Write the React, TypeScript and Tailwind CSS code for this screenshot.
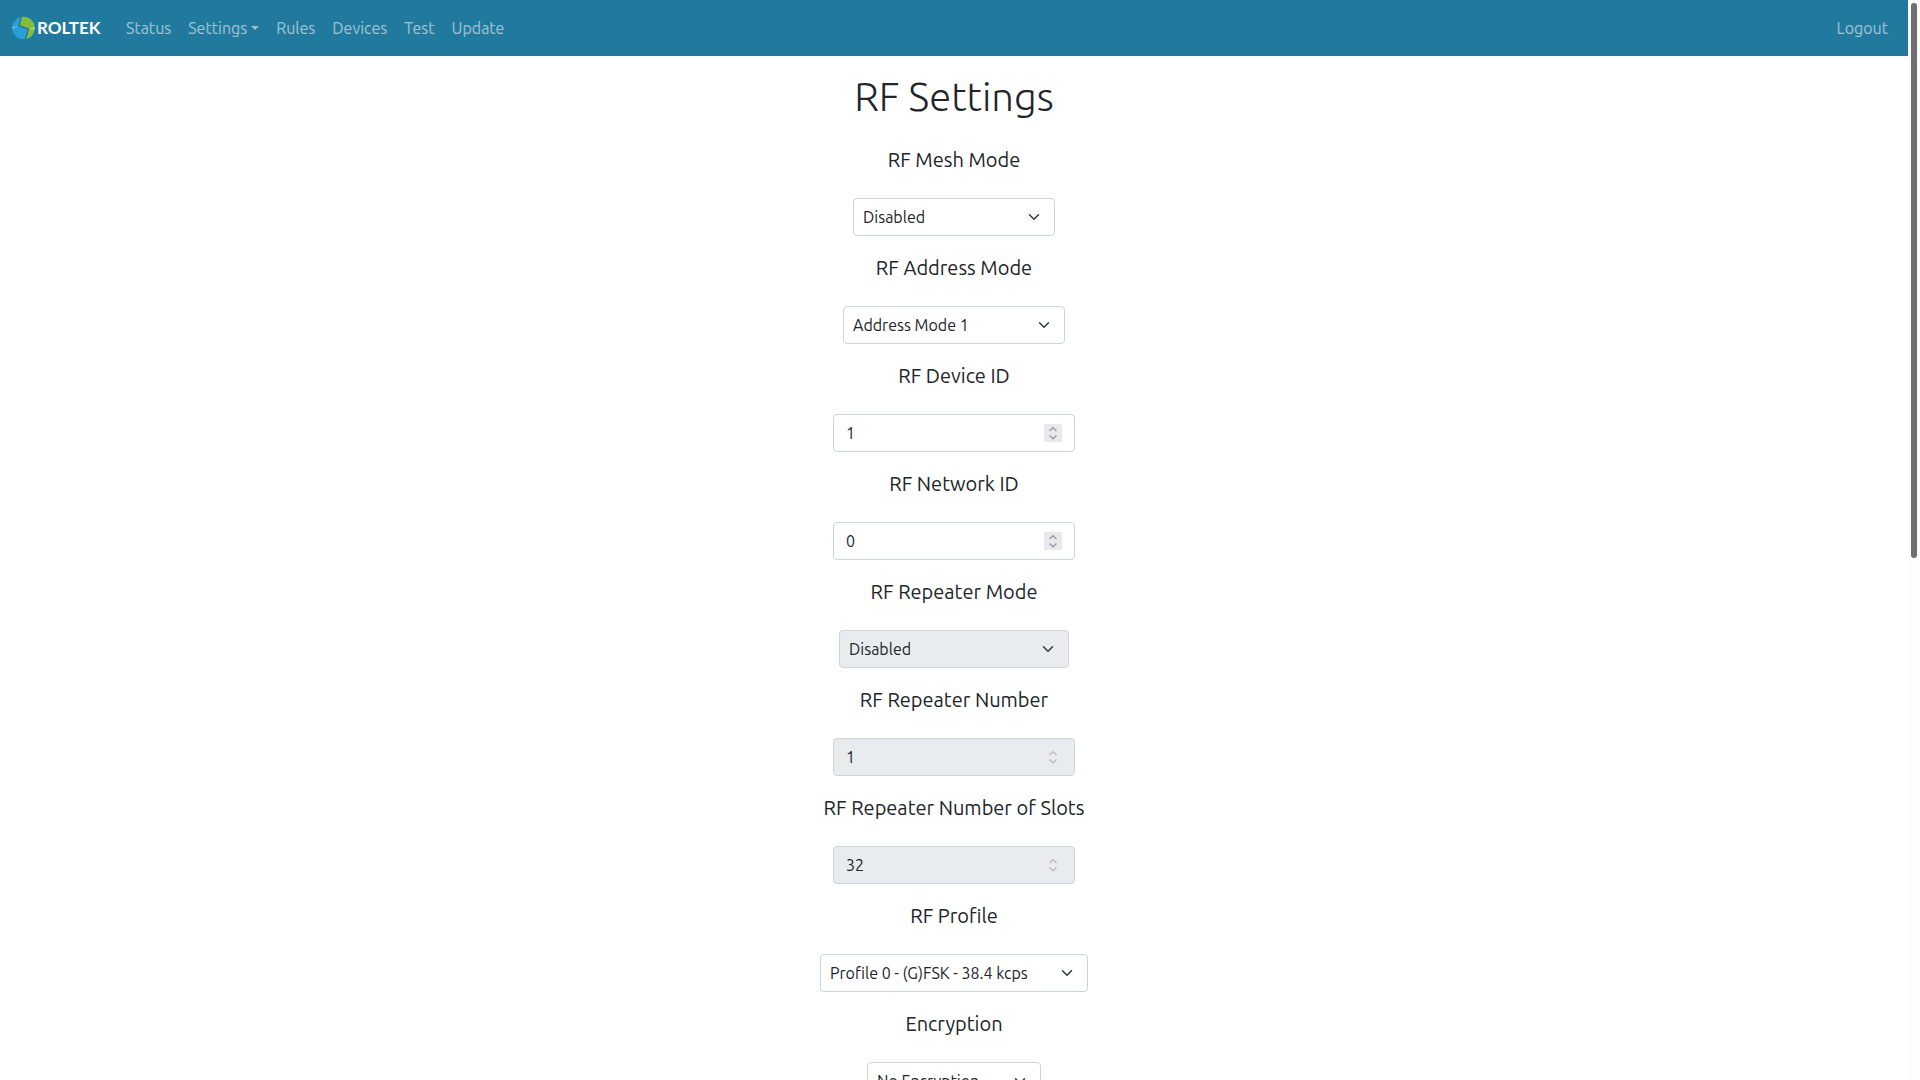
import { FC, ReactNode } from "react";

type Field = {
  id: string;
  label: string;
  type: "select" | "number";
  value: string;
  width: string;
  disabled?: boolean;
};

const fields: Field[] = [
  { id: "mesh-mode", label: "RF Mesh Mode", type: "select", value: "Disabled", width: "w-[202px]" },
  { id: "address-mode", label: "RF Address Mode", type: "select", value: "Address Mode 1", width: "w-[222px]" },
  { id: "device-id", label: "RF Device ID", type: "number", value: "1", width: "w-[242px]" },
  { id: "network-id", label: "RF Network ID", type: "number", value: "0", width: "w-[242px]" },
  { id: "repeater-mode", label: "RF Repeater Mode", type: "select", value: "Disabled", width: "w-[230px]", disabled: true },
  { id: "repeater-number", label: "RF Repeater Number", type: "number", value: "1", width: "w-[242px]", disabled: true },
  { id: "repeater-slots", label: "RF Repeater Number of Slots", type: "number", value: "32", width: "w-[242px]", disabled: true },
  { id: "profile", label: "RF Profile", type: "select", value: "Profile 0 - (G)FSK - 38.4 kcps", width: "w-[268px]" },
  { id: "encryption", label: "Encryption", type: "select", value: "No Encryption", width: "w-[174px]" },
];

const Logo: FC = () => (
  <a href="/" className="flex w-[90px] items-center gap-px text-white">
    <svg viewBox="0 0 24 24" className="size-6 shrink-0" aria-hidden="true">
      <circle cx="11.5" cy="12" r="11.3" fill="#2a9fd6" />
      <path d="M9.6 0.9 A11.3 11.3 0 0 1 14.2 23 L16.6 13 L7.4 9.4 Z" fill="#86bc3a" />
      <path d="M9.2 0.9 L7.2 9.6 L16.4 13.2 L13.6 23" fill="none" stroke="#1f6f93" strokeWidth="1.2" />
      <path d="M0.4 10.8 L6.6 10 L0.6 13 Z" fill="#6cc3e8" />
      <path d="M22.6 11 L17.4 12.8 L22.6 13.4 Z" fill="#b5d77c" />
    </svg>
    <span className="font-['Lato',sans-serif] text-[17px] leading-6 font-bold">ROLTEK</span>
  </a>
);

const NavLink: FC<{ children: ReactNode }> = ({ children }) => (
  <a href="#" className="flex items-center gap-1 px-2 py-2 text-white/55 hover:text-white/75">
    {children}
  </a>
);

const Navbar: FC = () => (
  <nav className="flex h-14 items-center bg-[#21799e] px-3">
    <Logo />
    <div className="ml-4 flex gap-px">
      <NavLink>Status</NavLink>
      <NavLink>
        Settings
        <svg viewBox="0 0 8 4" className="h-1 w-2" fill="currentColor" aria-hidden="true">
          <path d="M0 0h8L4 4z" />
        </svg>
      </NavLink>
      <NavLink>Rules</NavLink>
      <NavLink>Devices</NavLink>
      <NavLink>Test</NavLink>
      <NavLink>Update</NavLink>
    </div>
    <div className="ml-auto">
      <NavLink>Logout</NavLink>
    </div>
  </nav>
);

const SelectField: FC<{ field: Field }> = ({ field }) => (
  <div className={`relative ${field.width}`}>
    <select
      id={field.id}
      disabled={field.disabled}
      className="h-[38px] w-full appearance-none rounded border border-[#ced4da] bg-white pr-8 pl-[9px] text-[#212529] opacity-100 disabled:bg-[#e9ecef]"
    >
      <option>{field.value}</option>
    </select>
    <svg
      viewBox="0 0 16 16"
      className="pointer-events-none absolute top-[13px] right-[15px] size-3"
      fill="none"
      stroke="#343a40"
      strokeWidth="2"
      strokeLinecap="round"
      strokeLinejoin="round"
      aria-hidden="true"
    >
      <path d="m2 5 6 6 6-6" />
    </svg>
  </div>
);

const NumberField: FC<{ field: Field }> = ({ field }) => (
  <div
    className={`flex h-[38px] items-center rounded border border-[#ced4da] px-3 ${field.width} ${
      field.disabled ? "bg-[#e9ecef]" : "bg-white"
    }`}
  >
    <input
      id={field.id}
      type="number"
      defaultValue={field.value}
      disabled={field.disabled}
      className="min-w-0 flex-1 appearance-none bg-transparent text-[#212529] outline-none [-moz-appearance:textfield] [&::-webkit-inner-spin-button]:appearance-none"
    />
    <svg
      viewBox="0 0 18 18"
      className={`size-[18px] ${field.disabled ? "text-[#bdbec2]" : "bg-[#e9e9ed] text-[#9a9aa3]"}`}
      fill="none"
      stroke="currentColor"
      strokeWidth="1.5"
      aria-hidden="true"
    >
      <path d="M5.5 7 9 3.8 12.5 7M5.5 11.5 9 14.7 12.5 11.5" />
    </svg>
  </div>
);

const App: FC = () => {
  return (
    <div className="flex h-screen overflow-hidden bg-white font-['Ubuntu','Noto_Sans',sans-serif] text-base text-[#212529]">
      <div className="min-w-0 flex-1 overflow-y-auto [scrollbar-width:none]">
        <Navbar />
        <main className="flex flex-col items-center pt-[17px]">
          <h1 className="mb-[27px] text-[40px] leading-[48px] font-light">RF Settings</h1>
          <form className="flex flex-col items-center gap-5">
            {fields.map((field) => (
              <div key={field.id} className="flex flex-col items-center gap-[26px]">
                <label htmlFor={field.id} className="text-xl leading-6">
                  {field.label}
                </label>
                {field.type === "select" ? <SelectField field={field} /> : <NumberField field={field} />}
              </div>
            ))}
          </form>
        </main>
      </div>
      <div className="flex w-3 justify-center bg-[#fdfdfd] py-[3px]" aria-hidden="true">
        <div className="h-[555px] w-[6px] rounded-full bg-[#6f6f6f]" />
      </div>
    </div>
  );
};

export default App;
